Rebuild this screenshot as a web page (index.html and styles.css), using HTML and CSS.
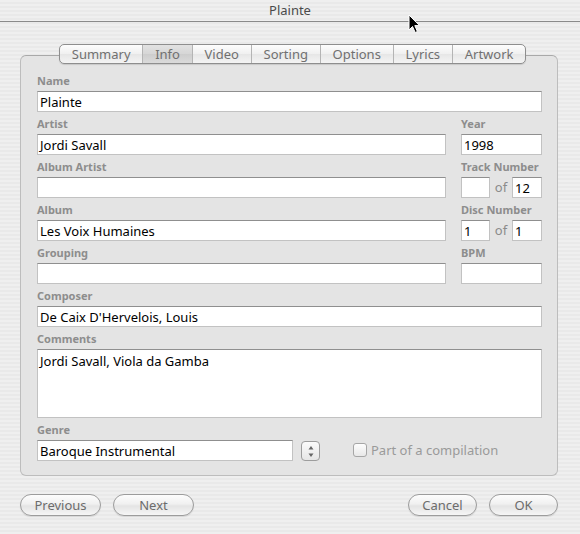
FILE: index.html
```html
<!DOCTYPE html>
<html>
<head>
<meta charset="utf-8">
<link rel="stylesheet" href="styles.css">
</head>
<body>
<div class="window">
  <div class="titlebar">Plainte</div>
  <div class="content">
    <div class="tabs">
      <span class="tab">Summary</span>
      <span class="tab selected">Info</span>
      <span class="tab">Video</span>
      <span class="tab">Sorting</span>
      <span class="tab">Options</span>
      <span class="tab">Lyrics</span>
      <span class="tab">Artwork</span>
    </div>
    <div class="panel">
      <div class="grid">
        <div class="field span2"><div class="label">Name</div><div class="input">Plainte</div></div>
        <div class="field"><div class="label">Artist</div><div class="input">Jordi Savall</div></div>
        <div class="field"><div class="label">Year</div><div class="input">1998</div></div>
        <div class="field"><div class="label">Album Artist</div><div class="input"></div></div>
        <div class="field"><div class="label">Track Number</div>
          <div class="pair"><div class="input small"></div><span class="of">of</span><div class="input small">12</div></div>
        </div>
        <div class="field"><div class="label">Album</div><div class="input">Les Voix Humaines</div></div>
        <div class="field"><div class="label">Disc Number</div>
          <div class="pair"><div class="input small">1</div><span class="of">of</span><div class="input small">1</div></div>
        </div>
        <div class="field"><div class="label">Grouping</div><div class="input"></div></div>
        <div class="field"><div class="label">BPM</div><div class="input"></div></div>
        <div class="field span2"><div class="label">Composer</div><div class="input">De Caix D'Hervelois, Louis</div></div>
        <div class="field span2"><div class="label">Comments</div><div class="input area">Jordi Savall, Viola da Gamba</div></div>
        <div class="field span2"><div class="label">Genre</div>
          <div class="genre-row">
            <div class="input combo">Baroque Instrumental</div>
            <div class="stepper">
              <svg width="6" height="13" viewBox="0 0 6 13"><path d="M3 1 L5.5 4.5 L0.5 4.5 Z M3 12 L5.5 8.5 L0.5 8.5 Z" fill="#666"/></svg>
            </div>
            <div class="check"></div>
            <span class="check-label">Part of a compilation</span>
          </div>
        </div>
      </div>
    </div>
    <div class="buttons">
      <div class="btn w-prev">Previous</div>
      <div class="btn w-next">Next</div>
      <div class="spacer"></div>
      <div class="btn w-cancel">Cancel</div>
      <div class="btn w-ok">OK</div>
    </div>
  </div>
  <svg class="cursor" width="13" height="20" viewBox="0 0 13 20"><path d="M1 1 L1 16 L4.5 12.5 L7.2 18.5 L9.4 17.5 L6.8 11.6 L11.5 11.6 Z" fill="#000" stroke="#fff" stroke-width="1" stroke-linejoin="round"/></svg>
</div>
</body>
</html>
```

FILE: styles.css
```css
* { box-sizing: border-box; }
html, body {
  margin: 0;
  padding: 0;
}
body {
  width: 580px;
  height: 534px;
  overflow: hidden;
  font-family: "Noto Sans", "DejaVu Sans", sans-serif;
  font-size: 13px;
  color: #000;
}
.window {
  position: relative;
  width: 580px;
  height: 534px;
  background: repeating-linear-gradient(to bottom, #efefef 0 2px, #e9e9e9 2px 4px);
}
.titlebar {
  height: 22px;
  line-height: 21px;
  text-align: center;
  color: #4a4a4a;
  border-bottom: 1px solid #8a8a8a;
}
.content {
  display: flex;
  flex-direction: column;
  padding: 22px 22px 0 20px;
}
.tabs {
  position: relative;
  z-index: 2;
  align-self: flex-start;
  margin-left: 39px;
  display: flex;
  height: 20px;
  border: 1px solid #8e8e8e;
  border-radius: 5px;
  overflow: hidden;
  background: linear-gradient(to bottom, #fdfdfd, #f0f0f0 50%, #e6e6e6 51%, #f4f4f4);
  box-shadow: 0 1px 1px rgba(0,0,0,0.12);
}
.tab {
  padding: 0 11.8px;
  line-height: 18px;
  color: #707070;
  border-left: 1px solid #b4b4b4;
}
.tab:first-child { border-left: none; }
.tab.selected {
  background: linear-gradient(to bottom, #e2e2e2, #d6d6d6 50%, #cdcdcd 51%, #dadada);
}
.panel {
  margin-top: -9px;
  background: #e4e4e4;
  border: 1px solid #bdbdbd;
  border-top-color: #a9a9a9;
  border-radius: 6px;
  padding: 18px 15px 14px 16px;
}
.grid {
  display: grid;
  grid-template-columns: 1fr 81px;
  column-gap: 15px;
  row-gap: 5px;
}
.span2 { grid-column: 1 / 3; }
.field {
  display: flex;
  flex-direction: column;
}
.label {
  font-size: 11px;
  font-weight: bold;
  color: #8d8d8d;
  line-height: 14px;
  height: 14px;
  margin-bottom: 3px;
  white-space: nowrap;
}
.input {
  height: 21px;
  background: #fff;
  border: 1px solid #c2c2c2;
  border-top-color: #8f8f8f;
  padding: 0 2px;
  line-height: 20px;
  white-space: nowrap;
  overflow: hidden;
}
.input.area {
  height: 69px;
  padding-top: 1px;
}
.pair {
  display: flex;
  justify-content: space-between;
  align-items: center;
}
.input.small { width: 30px; }
.pair .input.small:first-child { width: 29px; }
.of {
  color: #8b8b8b;
  line-height: 21px;
}
.genre-row {
  display: flex;
  align-items: flex-start;
}
.input.combo { width: 256px; }
.stepper {
  margin-left: 8px;
  margin-top: 1px;
  width: 19px;
  height: 20px;
  border: 1px solid #9d9d9d;
  border-radius: 4px;
  background: linear-gradient(to bottom, #fbfbfb, #e6e6e6);
  display: flex;
  align-items: center;
  justify-content: center;
}
.check {
  margin-left: 33px;
  margin-top: 3px;
  width: 14px;
  height: 14px;
  border: 1px solid #a6a6a6;
  border-radius: 3px;
  background: linear-gradient(to bottom, #fdfdfd, #e8e8e8);
}
.check-label {
  margin-left: 4px;
  color: #9a9a9a;
  line-height: 20px;
}
.buttons {
  display: flex;
  margin-top: 18px;
  gap: 12px;
}
.spacer { flex: 1; }
.btn {
  height: 22px;
  border: 1px solid #9c9c9c;
  border-radius: 11px;
  background: linear-gradient(to bottom, #fdfdfd, #f0f0f0 45%, #e4e4e4 55%, #f6f6f6);
  color: #6c6c6c;
  text-align: center;
  line-height: 20px;
  box-shadow: 0 1px 1px rgba(0,0,0,0.1);
}
.w-prev { width: 81px; }
.w-next { width: 81px; }
.w-cancel { width: 69px; }
.w-ok { width: 69px; }
.cursor {
  position: absolute;
  left: 408px;
  top: 14px;
}
```
